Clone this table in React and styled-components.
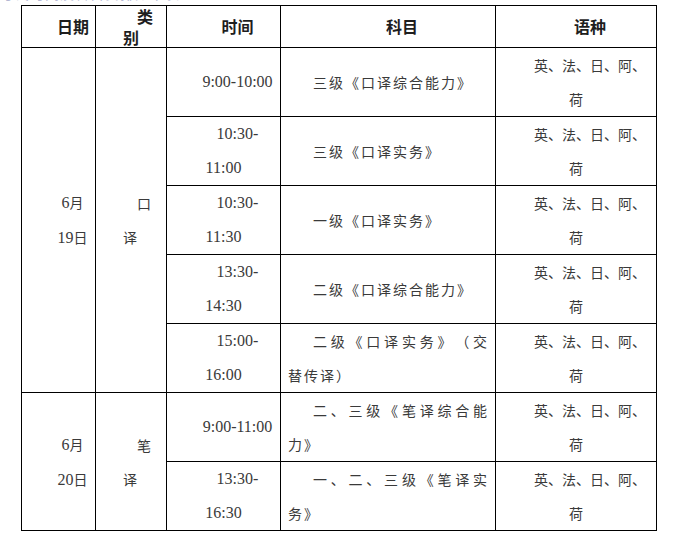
import React from "react";
import styled, { createGlobalStyle } from "styled-components";

const GlobalStyle = createGlobalStyle`
  html, body {
    margin: 0;
    padding: 0;
    background: #ffffff;
  }
  body {
    font-family: "Noto Sans CJK SC", sans-serif;
    color: #333333;
  }
`;

const langs = ["英、法、日、阿、", "荷"];

const groups = [
  {
    date: ["6", "19"],
    kind: ["口", "译"],
    rows: [
      { time: ["9:00-10:00"], subject: ["三级《口译综合能力》"] },
      { time: ["10:30-", "11:00"], subject: ["三级《口译实务》"] },
      { time: ["10:30-", "11:30"], subject: ["一级《口译实务》"] },
      { time: ["13:30-", "14:30"], subject: ["二级《口译综合能力》"] },
      { time: ["15:00-", "16:00"], subject: ["二级《口译实务》（交", "替传译）"] },
    ],
  },
  {
    date: ["6", "20"],
    kind: ["笔", "译"],
    rows: [
      { time: ["9:00-11:00"], subject: ["二、三级《笔译综合能", "力》"] },
      { time: ["13:30-", "16:30"], subject: ["一、二、三级《笔译实", "务》"] },
    ],
  },
];

const App = () => {
  return (
    <>
      <GlobalStyle />
      <Page>
        <TopClip>
          <TopLine>考试时间及科目安排如下表</TopLine>
        </TopClip>
        <Table>
          <colgroup>
            <Col $w={74} />
            <Col $w={71} />
            <Col $w={114} />
            <Col $w={215} />
            <Col $w={161} />
          </colgroup>
          <thead>
            <tr>
              <HeadCell>日期</HeadCell>
              <HeadCell>
                类<br />别
              </HeadCell>
              <HeadCell>时间</HeadCell>
              <HeadCell>科目</HeadCell>
              <HeadCell>语种</HeadCell>
            </tr>
          </thead>
          <tbody>
            {groups.map((group) =>
              group.rows.map((row, i) => (
                <tr key={group.date[1] + "-" + i}>
                  {i === 0 && (
                    <>
                      <DateCell rowSpan={group.rows.length}>
                        <Para>
                          <Num>{group.date[0]}</Num>月
                        </Para>
                        <Para>
                          <Num>{group.date[1]}</Num>日
                        </Para>
                      </DateCell>
                      <KindCell rowSpan={group.rows.length}>
                        {group.kind[0]}
                        <br />
                        {group.kind[1]}
                      </KindCell>
                    </>
                  )}
                  <TimeCell>
                    {row.time[0]}
                    {row.time[1] && (
                      <>
                        <br />
                        {row.time[1]}
                      </>
                    )}
                  </TimeCell>
                  <SubjectCell>
                    <SubjectLine $first $full={row.subject.length > 1}>
                      {row.subject[0]}
                    </SubjectLine>
                    {row.subject[1] && <SubjectLine>{row.subject[1]}</SubjectLine>}
                  </SubjectCell>
                  <LangCell>
                    {langs[0]}
                    <br />
                    {langs[1]}
                  </LangCell>
                </tr>
              ))
            )}
          </tbody>
        </Table>
      </Page>
    </>
  );
};

export default App;

const Page = styled.div`
  width: 674px;
  height: 534px;
  overflow: hidden;
  padding-left: 21px;
  box-sizing: border-box;
`;

/* only the foot of the line above the table shows in the shot */
const TopClip = styled.div`
  height: 5px;
  overflow: hidden;
  display: flex;
  align-items: flex-end;
  margin-left: -21px;
`;

const TopLine = styled.div`
  flex: none;
  font-size: 14px;
  line-height: 14px;
  letter-spacing: 1px;
  color: #b4b8d4;
  margin-bottom: 5px;
`;

const Table = styled.table`
  border-collapse: collapse;
  table-layout: fixed;
  width: 636px;

  td, th {
    border: 1px solid #000000;
    padding: 0 7px;
    vertical-align: middle;
    text-indent: 28px;
    text-spacing-trim: space-all;
  }
`;

const Col = styled.col`
  width: ${(p) => p.$w}px;
`;

const HeadCell = styled.th`
  height: 41px;
  font-family: "Noto Sans CJK SC", sans-serif;
  font-weight: 700;
  font-size: 16px;
  line-height: 20.5px;
  color: #1e1e1e;
  text-align: center;
  white-space: nowrap;
`;

const BodyCell = styled.td`
  height: 68px;
  font-family: "Noto Sans CJK SC", sans-serif;
  font-size: 14px;
  line-height: 34px;
  color: #3a3a3a;
`;

const DateCell = styled(BodyCell)`
  text-align: center;
`;

const Para = styled.div`
  text-indent: 28px;
  white-space: nowrap;
`;

const Num = styled.span`
  font-family: "Liberation Serif", serif;
  font-size: 16px;
`;

const KindCell = styled(BodyCell)`
  text-align: center;
  letter-spacing: 2px;
`;

const TimeCell = styled(BodyCell)`
  text-align: center;
  white-space: nowrap;
  font-family: "Liberation Serif", serif;
  font-size: 16px;
`;

const SubjectCell = styled(BodyCell)`
  letter-spacing: 2px;
  text-indent: 0 !important;
  padding-right: 6px !important;
`;

const SubjectLine = styled.div`
  white-space: nowrap;
  text-indent: ${(p) => (p.$first ? "25px" : "0")};
  text-align: ${(p) => (p.$full ? "justify" : "left")};
  text-align-last: ${(p) => (p.$full ? "justify" : "left")};
  text-justify: inter-character;
`;

const LangCell = styled(BodyCell)`
  text-align: center;
  white-space: nowrap;
`;
